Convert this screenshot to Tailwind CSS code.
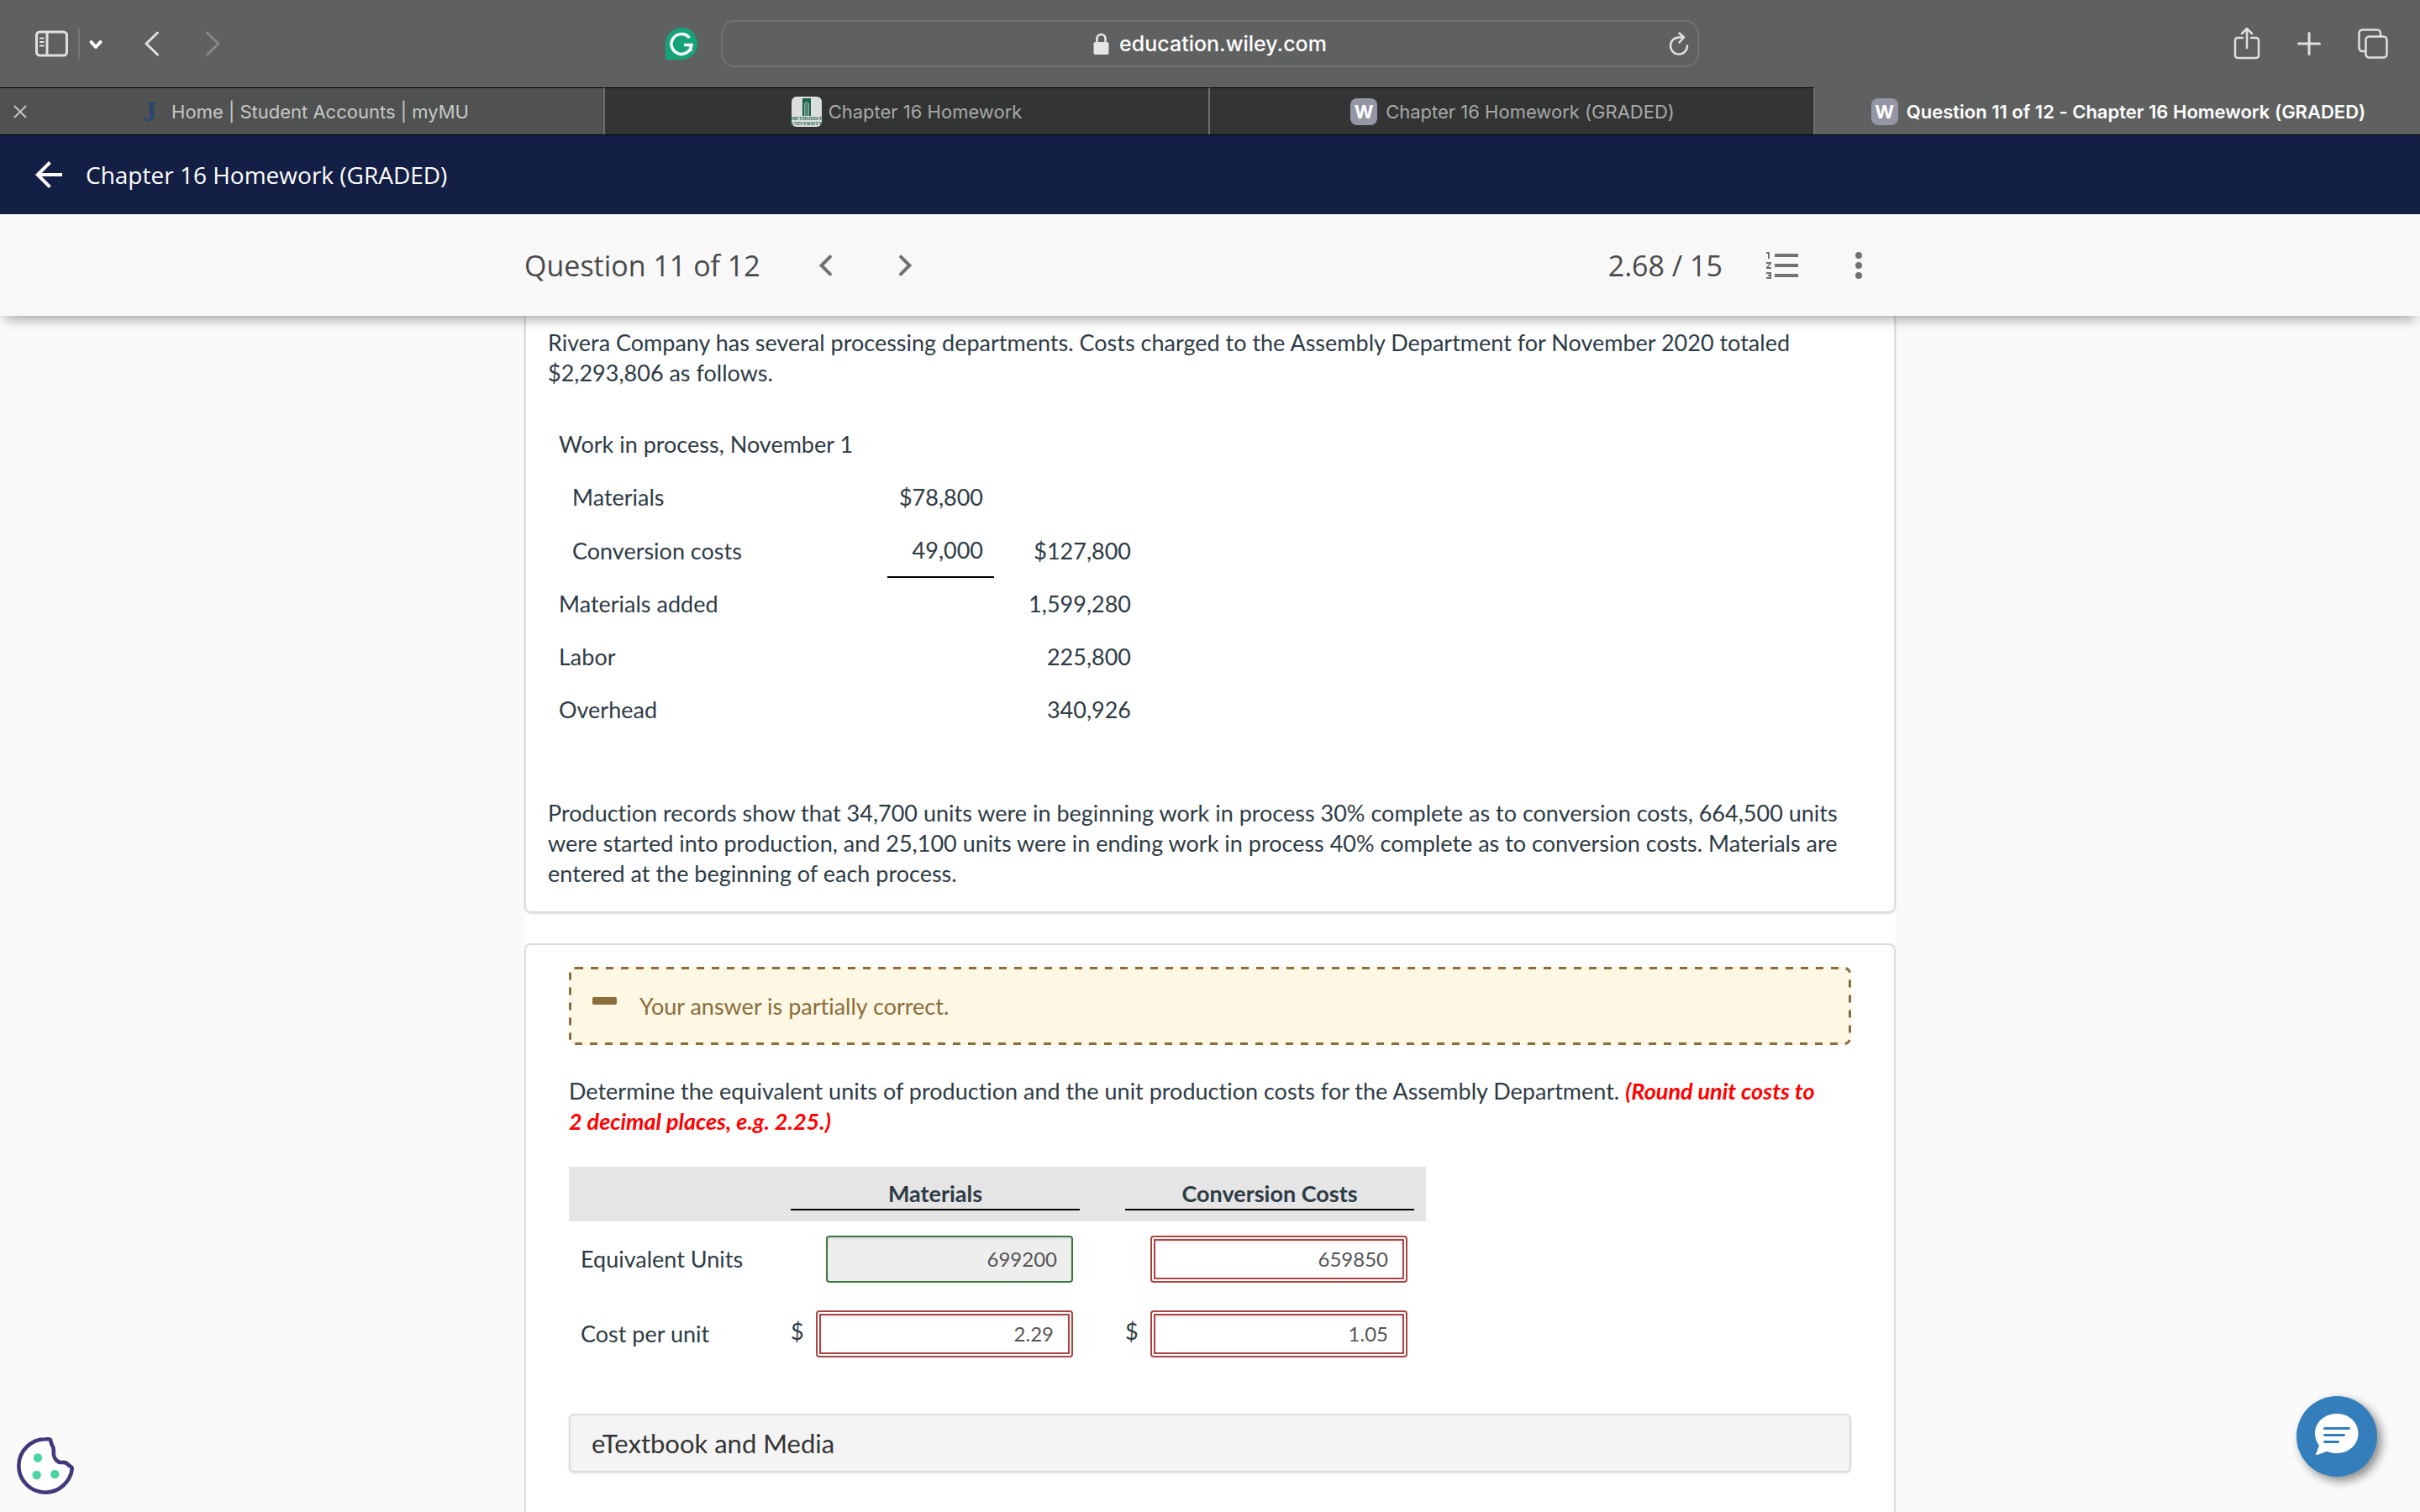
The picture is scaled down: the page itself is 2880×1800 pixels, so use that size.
<!DOCTYPE html>
<html lang="en">
<head>
<meta charset="utf-8">
<meta name="viewport" content="width=device-width, initial-scale=1">
<title>Question 11 of 12 - Chapter 16 Homework (GRADED)</title>
<script src="https://cdn.jsdelivr.net/npm/@tailwindcss/browser@4"></script>
</head>
<body class="flex min-h-screen flex-col bg-[#fafafa] font-['Lato',sans-serif] text-[27px] leading-9 text-[#2d3b45] [font-variant-ligatures:none]">

<!-- Browser toolbar -->
<div class="bg-[#5f6160] font-['Inter',sans-serif] text-[#dfe1e0]">
  <div class="grid h-[104px] grid-cols-[1fr_minmax(0,1164px)_1fr] items-center">
    <div class="flex items-center justify-between pr-7 pl-10">
      <div class="flex items-center">
        <button type="button" aria-label="Show sidebar">
          <svg class="h-8 w-[43px]" viewBox="0 0 43 32" fill="none" stroke="currentColor" stroke-width="3"><rect x="3.500" y="2" width="36" height="28" rx="4"/><path d="M16 2v28"/><path d="M7 9.500h5.500M7 14h5.500M7 18.500h5.500" stroke-width="2"/></svg>
        </button>
        <span class="mx-2.5 h-9 w-0.5 bg-[#757776]"></span>
        <button type="button" aria-label="Tab groups">
          <svg class="h-4 w-[18px] text-white" viewBox="0 0 18 16" fill="none" stroke="currentColor" stroke-width="4" stroke-linecap="round" stroke-linejoin="round"><path d="M3.500 6L9 12l5.500-6"/></svg>
        </button>
        <button type="button" aria-label="Back" class="ml-12">
          <svg class="h-8 w-5" viewBox="0 0 20 32" fill="none" stroke="currentColor" stroke-width="3" stroke-linecap="round" stroke-linejoin="round"><path d="M16.500 3L3 16l13.500 13"/></svg>
        </button>
        <button type="button" aria-label="Forward" class="ml-[52px] text-[#868887]">
          <svg class="h-8 w-5" viewBox="0 0 20 32" fill="none" stroke="currentColor" stroke-width="3" stroke-linecap="round" stroke-linejoin="round"><path d="M3.500 3L17 16 3.500 29"/></svg>
        </button>
      </div>
      <button type="button" aria-label="Grammarly">
        <svg class="size-[38px]" viewBox="0 0 38 38"><path d="M19 0a19 19 0 1 1 0 38H0V19A19 19 0 0 1 19 0z" fill="#15a47a"/><path d="M28.500 12A12 12 0 1 0 31 20.500h-9M30 21v7" fill="none" stroke="#fff" stroke-width="3.500"/></svg>
      </button>
    </div>
    <div class="relative flex h-14 items-center justify-center gap-3 rounded-2xl border-2 border-[#717372] text-[25px] font-medium text-white">
      <svg class="h-[26px] w-[19px] text-[#e6e6e6]" viewBox="0 0 19 26"><path d="M4.500 12V7a5 5 0 0 1 10 0v5" fill="none" stroke="currentColor" stroke-width="2.500"/><rect x=".5" y="11" width="18" height="15" rx="2.500" fill="currentColor"/></svg>
      <span>education.wiley.com</span>
      <button type="button" aria-label="Reload" class="absolute right-2.5">
        <svg class="h-7 w-6 text-[#dfe1e0]" viewBox="0 0 24 28" fill="none" stroke="currentColor" stroke-width="2.500" stroke-linecap="round" stroke-linejoin="round"><path d="M22 16.500A10 10 0 1 1 12 6.500h5M12.500 1.500L18 6.500l-5.500 6"/></svg>
      </button>
    </div>
    <div class="flex items-center justify-end gap-11 pr-[38px]">
      <button type="button" aria-label="Share">
        <svg class="h-10 w-8" viewBox="0 0 32 40" fill="none" stroke="currentColor" stroke-width="2.500" stroke-linecap="round" stroke-linejoin="round"><path d="M11 13H5a3 3 0 0 0-3 3v18a3 3 0 0 0 3 3h22a3 3 0 0 0 3-3V16a3 3 0 0 0-3-3h-6M16 25V2.500M10 8l6-6 6 6"/></svg>
      </button>
      <button type="button" aria-label="New tab">
        <svg class="size-7" viewBox="0 0 28 28" fill="none" stroke="currentColor" stroke-width="3" stroke-linecap="round"><path d="M14 1.500v25M1.500 14h25"/></svg>
      </button>
      <button type="button" aria-label="Tab overview">
        <svg class="size-9" viewBox="0 0 36 36" fill="none" stroke="currentColor" stroke-width="2.500"><rect x="9.500" y="9.500" width="25" height="25" rx="4"/><path d="M9.500 27H5.500a4 4 0 0 1-4-4V5.500a4 4 0 0 1 4-4H23a4 4 0 0 1 4 4v4"/></svg>
      </button>
    </div>
  </div>
  <!-- Tabs -->
  <nav class="grid grid-cols-4 border-b border-black text-[22px] text-[#a8aaa9]">
    <a href="#" class="relative flex h-14 items-center justify-center gap-2 border-t border-r-2 border-t-black border-r-[#6c6e6d] bg-[#505251] text-[#c6c8c7]">
      <svg class="absolute left-4 size-4" viewBox="0 0 16 16" fill="none" stroke="currentColor" stroke-width="1.800"><path d="M1 1l14 14M15 1L1 15"/></svg>
      <span class="w-9 text-center font-['Liberation_Serif',serif] text-[34px] font-bold text-[#2b4470]">J</span>
      <span>Home | Student Accounts | myMU</span>
    </a>
    <a href="#" class="flex h-14 items-center justify-center gap-2 border-t border-r-2 border-t-black border-r-[#6c6e6d] bg-[#333534]">
      <span class="flex size-9 flex-col items-center rounded-md bg-[#dcdedd] pt-0.5 font-['Liberation_Serif',serif] text-[6px] leading-[6px] font-bold text-[#1f6b50]">
        <svg class="h-[21px] w-3" viewBox="0 0 12 21"><path d="M1 0h10v21H1z" fill="#1b6048"/><path d="M3 21V6q3-4 6 0v15z" fill="#8fae9f"/><path d="M5 5v16M7 5v16" stroke="#1b6048"/></svg>
        <span>METHODIST</span><span>UNIVERSITY</span>
      </span>
      <span>Chapter 16 Homework</span>
    </a>
    <a href="#" class="flex h-14 items-center justify-center gap-2 border-t border-r-2 border-t-black border-r-[#6c6e6d] bg-[#333534]">
      <span class="mx-0.5 size-8 rounded-lg bg-[#9496a5] text-center text-[22px] leading-8 font-bold text-white">W</span>
      <span>Chapter 16 Homework (GRADED)</span>
    </a>
    <a href="#" aria-current="page" class="flex h-14 items-center justify-center gap-2 border-t border-transparent font-semibold text-white">
      <span class="mx-0.5 size-8 rounded-lg bg-[#9496a5] text-center text-[22px] leading-8 font-bold text-white">W</span>
      <span>Question 11 of 12 - Chapter 16 Homework (GRADED)</span>
    </a>
  </nav>
</div>

<!-- Course header -->
<header class="relative z-10 font-['Open_Sans',sans-serif]">
  <div class="flex h-[94px] items-center gap-5 bg-[#141f45] px-[34px] text-white">
    <a href="#" aria-label="Back to assignment">
      <svg class="size-12" viewBox="0 0 24 24" fill="currentColor"><path d="M20 11H7.830l5.590-5.590L12 4l-8 8 8 8 1.410-1.410L7.830 13H20v-2z"/></svg>
    </a>
    <h1 class="text-[28px] font-medium">Chapter 16 Homework (GRADED)</h1>
  </div>
  <div class="bg-[#f8f8f8] shadow-[0_10px_14px_-6px_rgba(0,0,0,0.35)]">
    <div class="mx-auto flex h-[121px] max-w-[1632px] items-center text-[34px] text-[#4a4a4a]">
      <h2>Question 11 of 12</h2>
      <div class="ml-[54px] flex gap-[46px] text-[#727272]">
        <button type="button" aria-label="Previous question"><svg class="size-12" viewBox="0 0 24 24" fill="none" stroke="currentColor" stroke-width="2" stroke-linecap="round"><path d="M14.500 6.800L9.300 12l5.200 5.200"/></svg></button>
        <button type="button" aria-label="Next question"><svg class="size-12" viewBox="0 0 24 24" fill="none" stroke="currentColor" stroke-width="2" stroke-linecap="round"><path d="M9.500 6.800l5.200 5.200-5.200 5.200"/></svg></button>
      </div>
      <span class="ml-auto">2.68 / 15</span>
      <div class="mr-5 ml-12 flex gap-[42px] text-[#727272]">
        <button type="button" aria-label="Question list"><svg class="size-12" viewBox="0 0 24 24" fill="currentColor"><path d="M2 17h2v.5H3v1h1v.5H2v1h3v-4H2v1zm1-9h1V4H2v1h1v3zm-1 3h1.800L2 13.100v.9h3v-1H3.200L5 10.900V10H2v1zm5-6v2h14V5H7zm0 14h14v-2H7v2zm0-6h14v-2H7v2z"/></svg></button>
        <button type="button" aria-label="More options"><svg class="size-12" viewBox="0 0 24 24" fill="currentColor"><circle cx="12" cy="6" r="2"/><circle cx="12" cy="12" r="2"/><circle cx="12" cy="18" r="2"/></svg></button>
      </div>
    </div>
  </div>
</header>

<main class="mx-auto flex w-full max-w-[1632px] flex-1 flex-col gap-9 bg-white">
  <section class="rounded-b-lg border-2 border-t-0 border-[#dcdcdc] px-[26px] pt-3.5 pb-[27px] shadow-sm">
    <p>Rivera Company has several processing departments. Costs charged to the Assembly Department for November 2020 totaled $2,293,806 as follows.</p>
    <table class="mt-[35px] table-fixed">
      <colgroup><col class="w-[404px]"><col class="w-[127px]"><col class="w-[176px]"></colgroup>
      <tbody class="[&_td]:px-[13px] [&_td]:pt-3.5 [&_td]:pb-[13px]">
        <tr><td>Work in process, November 1</td><td></td><td></td></tr>
        <tr><td><span class="pl-4">Materials</span></td><td class="text-right">$78,800</td><td></td></tr>
        <tr><td><span class="pl-4">Conversion costs</span></td><td class="border-b-2 border-black text-right">49,000</td><td class="text-right">$127,800</td></tr>
        <tr><td>Materials added</td><td></td><td class="text-right">1,599,280</td></tr>
        <tr><td>Labor</td><td></td><td class="text-right">225,800</td></tr>
        <tr><td>Overhead</td><td></td><td class="text-right">340,926</td></tr>
      </tbody>
    </table>
    <p class="mt-[74px]">Production records show that 34,700 units were in beginning work in process 30% complete as to conversion costs, 664,500 units were started into production, and 25,100 units were in ending work in process 40% complete as to conversion costs. Materials are entered at the beginning of each process.</p>
  </section>

  <section class="flex-1 rounded-t-lg border-2 border-b-0 border-[#dcdcdc] px-[51px] pt-[26px] pb-12">
    <div role="status" class="relative flex h-[93px] items-center gap-[27px] rounded-lg bg-[#fdf7e3] pl-7 text-[#8a6d3b]">
      <svg class="absolute inset-0 size-full rounded-lg" fill="none" stroke="currentColor"><rect width="100%" height="100%" rx="8" stroke-width="6" stroke-dasharray="9 9"/></svg>
      <svg class="mb-3 h-2.5 w-[29px]" viewBox="0 0 29 10"><rect width="29" height="9" rx="2" fill="currentColor"/></svg>
      <span>Your answer is partially correct.</span>
    </div>
    <p class="mt-[37px]">Determine the equivalent units of production and the unit production costs for the Assembly Department. <strong class="font-bold text-[#f00] italic">(Round unit costs to<br>2 decimal places, e.g. 2.25.)</strong></p>
    <table class="mt-9 w-[1020px] table-fixed">
      <colgroup><col class="w-[250px]"><col class="w-11"><col class="w-[328px]"><col class="w-[26px]"><col class="w-11"><col class="w-[328px]"></colgroup>
      <thead>
        <tr class="h-[65px] bg-[#e5e5e5]">
          <td></td>
          <th scope="col" colspan="2" class="px-3.5"><div class="border-b-2 border-black">Materials</div></th>
          <td></td>
          <th scope="col" colspan="2" class="px-3.5"><div class="border-b-2 border-black">Conversion Costs</div></th>
        </tr>
      </thead>
      <tbody>
        <tr class="h-[89px]">
          <th scope="row" class="pl-3.5 text-left font-normal">Equivalent Units</th>
          <td></td>
          <td><input type="text" aria-label="Equivalent units, materials" value="699200" readonly class="ml-3 block h-14 w-[294px] rounded-sm border-2 border-[#3c763d] bg-[#eee] pr-[17px] text-right text-2xl text-[#555] shadow-[inset_0_2px_3px_rgba(0,0,0,0.08)]"></td>
          <td></td>
          <td></td>
          <td><input type="text" aria-label="Equivalent units, conversion costs" value="659850" class="block h-14 w-[306px] rounded-sm border-6 border-double border-[#a94442] bg-white pr-[17px] text-right text-2xl text-[#555] shadow-[inset_0_2px_3px_rgba(0,0,0,0.08)]"></td>
        </tr>
        <tr class="h-[89px]">
          <th scope="row" class="pl-3.5 text-left font-normal">Cost per unit</th>
          <td class="pb-1.5 pl-3.5">$</td>
          <td><input type="text" aria-label="Cost per unit, materials" value="2.29" class="block h-14 w-[306px] rounded-sm border-6 border-double border-[#a94442] bg-white pr-[17px] text-right text-2xl text-[#555] shadow-[inset_0_2px_3px_rgba(0,0,0,0.08)]"></td>
          <td></td>
          <td class="pb-1.5 pl-3.5">$</td>
          <td><input type="text" aria-label="Cost per unit, conversion costs" value="1.05" class="block h-14 w-[306px] rounded-sm border-6 border-double border-[#a94442] bg-white pr-[17px] text-right text-2xl text-[#555] shadow-[inset_0_2px_3px_rgba(0,0,0,0.08)]"></td>
        </tr>
      </tbody>
    </table>
    <button type="button" class="mt-[51px] h-[70px] w-full rounded-md border-2 border-[#dcdcdc] bg-[#f4f4f4] px-[25px] text-left text-[31px] text-[#333] shadow-sm">eTextbook and Media</button>
  </section>
</main>

<button type="button" aria-label="Cookie settings" class="fixed bottom-[21px] left-5">
  <svg class="size-[68px]" viewBox="0 0 68 68"><path d="M34 2.300C37 2 39.500 2 40 3c.8 4 1 5.500 2.500 7.500 2 2.500 1 6 1.500 10.500.8 5.500 5 9.500 9.500 9 4-.5 5.500.2 7.500 2.500 1.500 2 5 2.500 4.800 4.500C64.500 52 51 65.700 34 65.700A31.700 31.700 0 0 1 34 2.300z" fill="#fff" stroke="#3f3a7a" stroke-width="4.600" stroke-linejoin="round"/><g fill="#4bd49f"><circle cx="25" cy="24.500" r="5.200"/><circle cx="23.700" cy="45" r="5.200"/><circle cx="45.300" cy="44" r="5.200"/></g></svg>
</button>
<button type="button" aria-label="Open chat" class="fixed right-[51px] bottom-[42px] rounded-full bg-[#347ebc] shadow-[5px_5px_12px_rgba(0,0,0,0.45)]">
  <svg class="size-24" viewBox="0 0 96 96"><path d="M48 21c14.500 0 25.500 10 25.500 23.500S62.500 68 48 68c-4.500 0-8-.8-12-2.300L25 70c-1.500.4-2.300-.3-1.800-1.600L27 59c-3-4-5-9-5-14.500C22 31 33.500 21 48 21z" fill="#fff"/><path d="M33.500 38.500h29M33.500 46.500h23M33.500 54.500h16" stroke="#347ebc" stroke-width="3" stroke-linecap="round"/></svg>
</button>
</body>
</html>
